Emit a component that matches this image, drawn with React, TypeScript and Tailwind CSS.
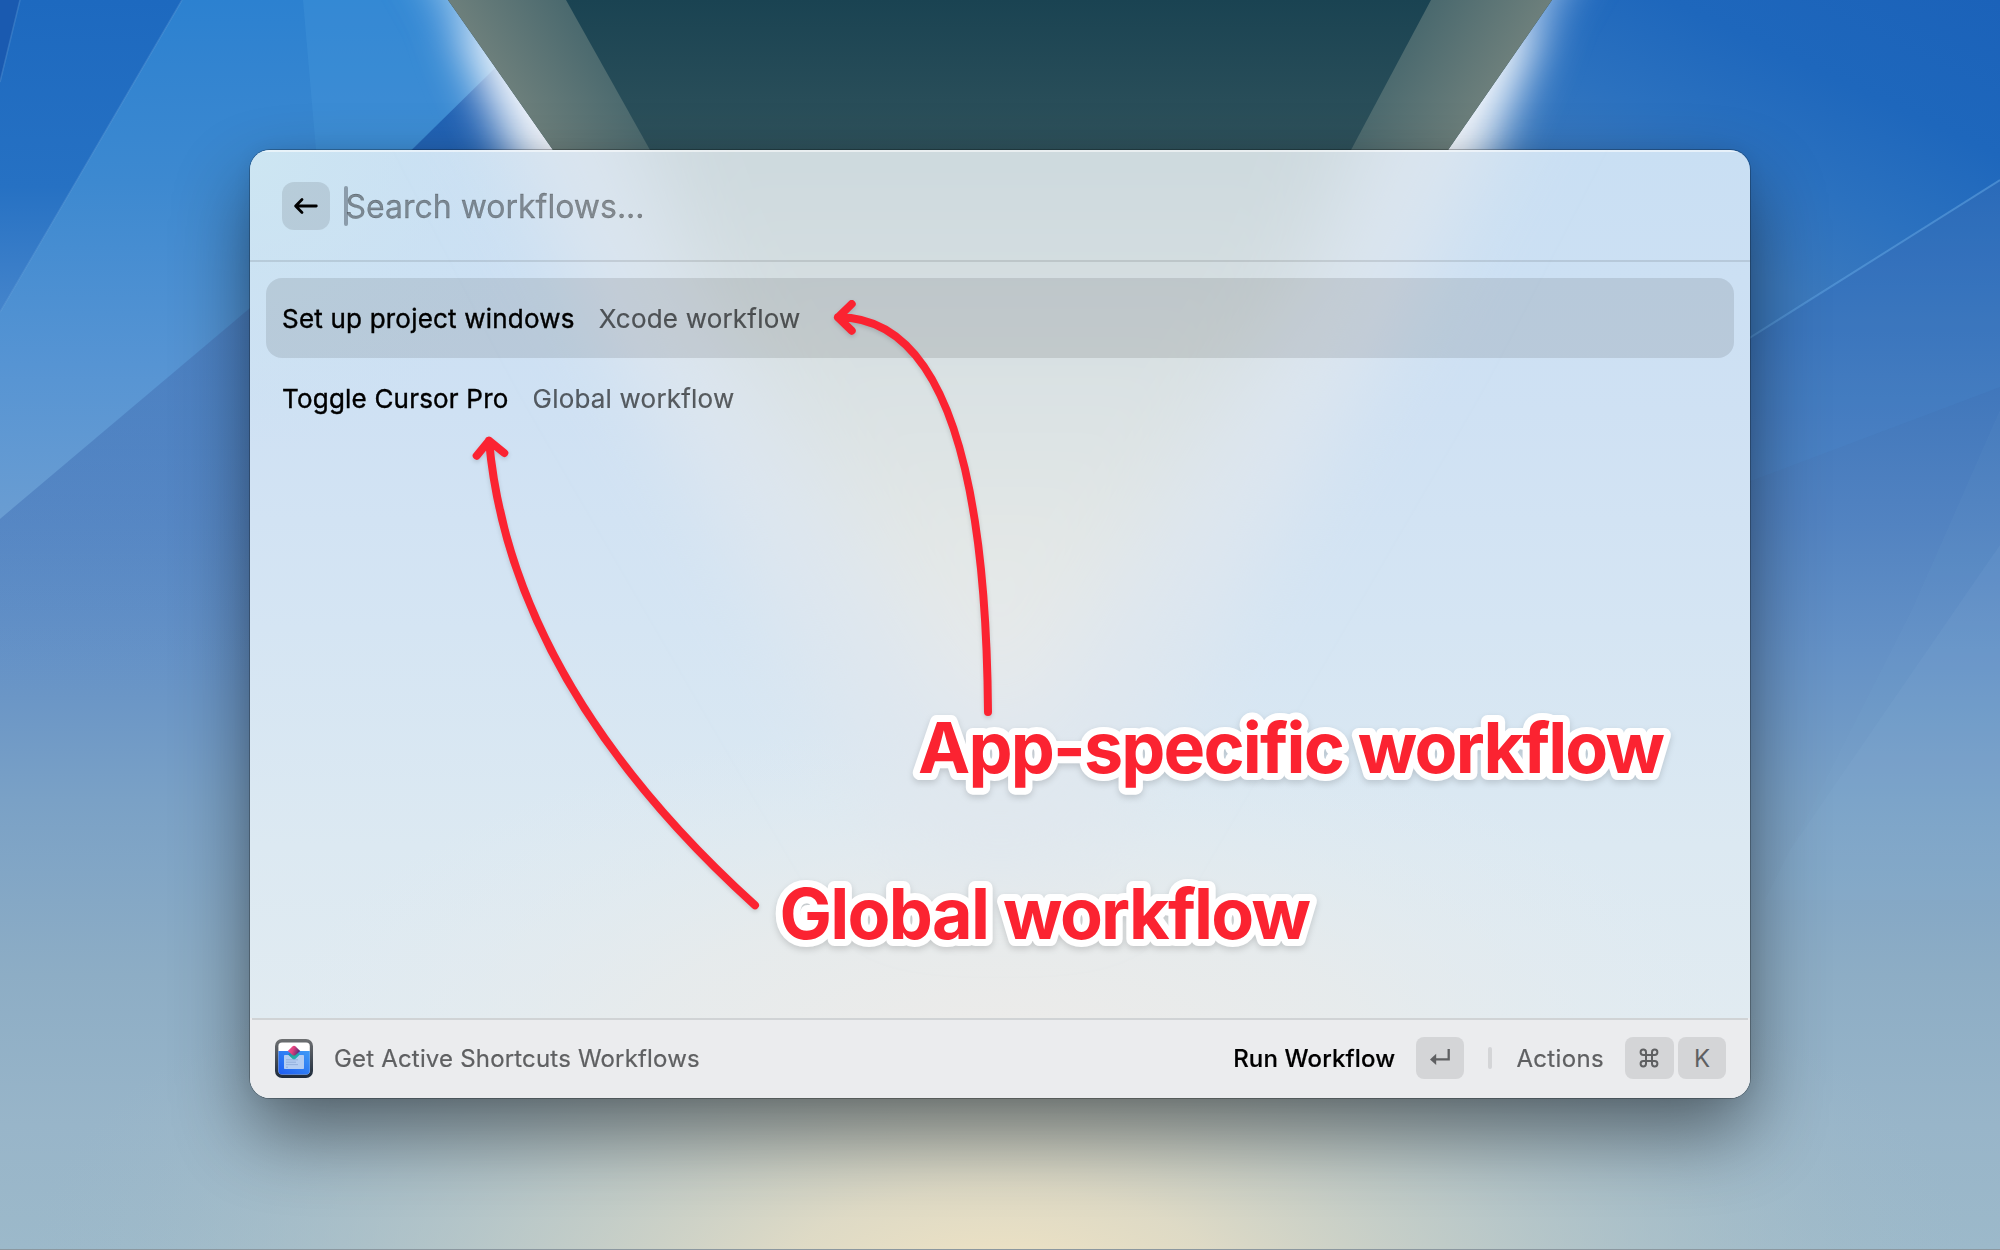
import type { ReactNode } from "react";

/* Abstract faceted wallpaper with a dark wedge at the top. */
function Wallpaper() {
  return (
    <svg className="absolute inset-0 size-full" viewBox="0 0 2000 1250" preserveAspectRatio="none" aria-hidden="true">
      <defs>
        <linearGradient id="base" gradientUnits="userSpaceOnUse" x1="0" y1="0" x2="0" y2="1250">
          <stop offset="0" stopColor="#1a5fb6" />
          <stop offset="0.14" stopColor="#2464b4" />
          <stop offset="0.3" stopColor="#3f76bb" />
          <stop offset="0.42" stopColor="#5283c1" />
          <stop offset="0.52" stopColor="#6491c6" />
          <stop offset="0.64" stopColor="#7aa1c6" />
          <stop offset="0.78" stopColor="#8dadc5" />
          <stop offset="0.9" stopColor="#98b5c9" />
          <stop offset="1" stopColor="#9cb9ca" />
        </linearGradient>
        <linearGradient id="leftLift" gradientUnits="userSpaceOnUse" x1="0" y1="300" x2="0" y2="700">
          <stop offset="0" stopColor="#6a9ad2" stopOpacity="0.4" />
          <stop offset="1" stopColor="#6a9ad2" stopOpacity="0" />
        </linearGradient>
        <radialGradient id="warm" gradientUnits="userSpaceOnUse" cx="0" cy="0" r="1" gradientTransform="translate(1000 1280) scale(980 420)">
          <stop offset="0" stopColor="#f0e3c3" />
          <stop offset="0.22" stopColor="#e4ddc5" stopOpacity="0.92" />
          <stop offset="0.5" stopColor="#c3cdc8" stopOpacity="0.8" />
          <stop offset="1" stopColor="#a0bac8" stopOpacity="0" />
        </radialGradient>
        <linearGradient id="facetA" gradientUnits="userSpaceOnUse" x1="0" y1="0" x2="0" y2="520">
          <stop offset="0" stopColor="#2c81d0" />
          <stop offset="0.35" stopColor="#3d89d0" />
          <stop offset="0.7" stopColor="#5694d3" />
          <stop offset="1" stopColor="#6a9dd2" />
        </linearGradient>
        <linearGradient id="facetB" gradientUnits="userSpaceOnUse" x1="0" y1="0" x2="0" y2="310">
          <stop offset="0" stopColor="#1d69bf" />
          <stop offset="0.6" stopColor="#2671c3" />
          <stop offset="1" stopColor="#4484cb" />
        </linearGradient>
        <linearGradient id="facetC" gradientUnits="userSpaceOnUse" x1="2000" y1="0" x2="1850" y2="320">
          <stop offset="0" stopColor="#1b62b9" />
          <stop offset="0.4" stopColor="#1e67bc" />
          <stop offset="0.7" stopColor="#2b71bf" />
          <stop offset="1" stopColor="#3c7abe" />
        </linearGradient>
        <linearGradient id="wedge" gradientUnits="userSpaceOnUse" x1="0" y1="0" x2="0" y2="150">
          <stop offset="0" stopColor="#1a4352" />
          <stop offset="1" stopColor="#2f525c" />
        </linearGradient>
        <linearGradient id="rimL" gradientUnits="userSpaceOnUse" x1="490" y1="110" x2="620" y2="25">
          <stop offset="0" stopColor="#76857f" />
          <stop offset="1" stopColor="#3f626a" />
        </linearGradient>
        <linearGradient id="rimR" gradientUnits="userSpaceOnUse" x1="1510" y1="110" x2="1380" y2="25">
          <stop offset="0" stopColor="#76857f" />
          <stop offset="1" stopColor="#3f626a" />
        </linearGradient>
        <filter id="glow" filterUnits="userSpaceOnUse" x="200" y="-200" width="1600" height="800">
          <feGaussianBlur stdDeviation="23" />
        </filter>
      </defs>
      <rect width="2000" height="1250" fill="url(#base)" />
      <rect width="2000" height="1250" fill="url(#warm)" />
      <polygon points="0,519 300,265 300,700 0,700" fill="url(#leftLift)" />
      <polygon points="182,0 495,0 495,68 250,308 0,519 0,312" fill="url(#facetA)" />
      <polygon points="303,0 495,0 495,68 412,150 316,150" fill="#4a9ade" opacity="0.3" />
      <polygon points="20,0 182,0 0,312 0,82" fill="url(#facetB)" />
      <polygon points="0,0 20,0 0,82" fill="#1a5ab0" />
      <path d="M182 0 0 312M20 0 0 82" stroke="#6fabe2" strokeOpacity="0.3" strokeWidth="1.5" />
      <polygon points="1400,0 2000,0 2000,180 1740,344 1400,517" fill="url(#facetC)" />
      <path d="M2000 180 1740 344" stroke="#5a9cdc" strokeOpacity="0.65" strokeWidth="2" />
      <polygon points="2000,180 1740,344 1740,485 2000,387" fill="#4f92dc" opacity="0.14" />
      <polygon points="2000,410 1912,610 1790,850 2000,850" fill="#8fb8e0" opacity="0.06" />
      <polygon points="2000,545 1962,600 1790,850 1765,900 2000,900" fill="#8fb8e0" opacity="0.1" />
      <g filter="url(#glow)">
        <polygon points="412,-60 620,-60 760,330 634,330" fill="#b9dbf6" opacity="0.85" />
        <polygon points="1588,-60 1380,-60 1240,330 1366,330" fill="#b9d4f3" opacity="0.85" />
        <polygon points="456,25 600,25 760,360 608,330 515,165" fill="#f4f8fd" />
        <polygon points="1544,25 1400,25 1240,360 1392,330 1485,165" fill="#f4f8fd" />
      </g>
      <polygon points="448,0 1552,0 1448,150 1300,360 700,360 553,150" fill="url(#wedge)" />
      <polygon points="448,0 566,0 650,150 553,150" fill="url(#rimL)" />
      <polygon points="1552,0 1431,0 1351,150 1448,150" fill="url(#rimR)" />
      <rect y="1249" width="2000" height="1" fill="#8b979f" />
    </svg>
  );
}

/* Frosted tint of the wallpaper seen through the window. */
function FrostedGlass() {
  return (
    <svg className="absolute inset-0 size-full" viewBox="250 150 1500 948" preserveAspectRatio="none" aria-hidden="true">
      <defs>
        <linearGradient id="glass" gradientUnits="userSpaceOnUse" x1="0" y1="150" x2="0" y2="1020">
          <stop offset="0" stopColor="#c9dff3" />
          <stop offset="0.3" stopColor="#cfe1f3" />
          <stop offset="0.55" stopColor="#d5e5f3" />
          <stop offset="0.8" stopColor="#dce9f2" />
          <stop offset="1" stopColor="#e1ebf1" />
        </linearGradient>
        <linearGradient id="beam" gradientUnits="userSpaceOnUse" x1="0" y1="150" x2="0" y2="780">
          <stop offset="0" stopColor="#cdd9de" />
          <stop offset="0.35" stopColor="#d9e1e3" />
          <stop offset="0.65" stopColor="#e4e8e7" />
          <stop offset="1" stopColor="#e8ebf0" />
        </linearGradient>
        <radialGradient id="floor" gradientUnits="userSpaceOnUse" cx="0" cy="0" r="1" gradientTransform="translate(1000 1080) scale(760 360)">
          <stop offset="0" stopColor="#eeebe8" />
          <stop offset="0.5" stopColor="#e8ebeb" stopOpacity="0.8" />
          <stop offset="1" stopColor="#e2ebf0" stopOpacity="0" />
        </radialGradient>
        <radialGradient id="corner" gradientUnits="userSpaceOnUse" cx="250" cy="150" r="300">
          <stop offset="0" stopColor="#cde6f2" />
          <stop offset="1" stopColor="#cbe2f3" stopOpacity="0" />
        </radialGradient>
        <filter id="soft" filterUnits="userSpaceOnUse" x="0" y="-200" width="2000" height="1400">
          <feGaussianBlur stdDeviation="42" />
        </filter>
      </defs>
      <rect x="250" y="150" width="1500" height="948" fill="url(#glass)" />
      <rect x="250" y="150" width="1500" height="948" fill="url(#corner)" />
      <rect x="250" y="150" width="1500" height="948" fill="url(#floor)" />
      <g filter="url(#soft)">
        <polygon points="430,0 1570,0 1400,330 1080,880 920,880 600,330" fill="#e0e7ee" opacity="0.75" />
        <polygon points="590,0 1410,0 1310,280 1030,720 970,720 690,280" fill="url(#beam)" />
      </g>
    </svg>
  );
}

function BackArrow() {
  return (
    <svg className="size-7" viewBox="0 0 28 28" fill="none" stroke="#000" strokeWidth="2.8" strokeLinecap="round" strokeLinejoin="round">
      <path d="M24.3 14H4M10 7.6 3.6 14 10 20.4" />
    </svg>
  );
}

function ReturnIcon() {
  return (
    <svg className="size-6" viewBox="0 0 24 24">
      <path d="M20.7 3v10.4H7" fill="none" stroke="#5f6062" strokeWidth="2.3" />
      <path d="M2 13.4 8.2 7.8v11.2Z" fill="#5f6062" />
    </svg>
  );
}

function CommandIcon() {
  return (
    <svg className="-ml-px size-6" viewBox="0 0 24 24" fill="none" stroke="#5f6062" strokeWidth="2">
      <path d="M9 9h6v6H9zM9 9H6.3A2.7 2.7 0 1 1 9 6.3zM15 9V6.3A2.7 2.7 0 1 1 17.7 9zM15 15h2.7a2.7 2.7 0 1 1-2.7 2.7zM9 15v2.7A2.7 2.7 0 1 1 6.3 15z" />
    </svg>
  );
}

function ExtensionIcon() {
  return (
    <svg className="h-[39px] w-[38px]" viewBox="0 0 38 39">
      <defs>
        <linearGradient id="frame" x1="0" y1="0" x2="0" y2="1">
          <stop offset="0" stopColor="#6e7072" />
          <stop offset="1" stopColor="#1d2a3b" />
        </linearGradient>
        <linearGradient id="panel" x1="1" y1="0" x2="0" y2="1">
          <stop offset="0" stopColor="#3f9bf6" />
          <stop offset="1" stopColor="#1e5cf2" />
        </linearGradient>
        <linearGradient id="gemTop" x1="0" y1="0" x2="1" y2="0.3">
          <stop offset="0" stopColor="#f0559c" />
          <stop offset="0.5" stopColor="#e0407c" />
          <stop offset="1" stopColor="#5a2a78" />
        </linearGradient>
        <linearGradient id="gemBottom" x1="0" y1="0" x2="1" y2="1">
          <stop offset="0" stopColor="#1768c8" />
          <stop offset="0.6" stopColor="#22b09c" />
          <stop offset="1" stopColor="#2f9be0" />
        </linearGradient>
      </defs>
      <rect width="38" height="39" rx="7" fill="url(#frame)" />
      <rect x="3.4" y="3.6" width="31.4" height="31.8" rx="3.6" fill="#fff" />
      <path d="M3.4 12h31.4v19.8a3.6 3.6 0 0 1-3.6 3.6H7a3.6 3.6 0 0 1-3.6-3.6Z" fill="url(#panel)" />
      <rect x="9" y="16" width="20" height="14" rx="0.8" fill="#b4cdf2" />
      <path d="M11 20.8h12M11 23.2h10M11 25.6h12M11 28.2h2" stroke="#8ba8d6" strokeWidth="0.8" />
      <path d="M13 15.5 19 10l6 5.5-4.4 4.2q-1.6 1.2-3.2 0Z" fill="url(#gemBottom)" />
      <path d="M12.8 12 17.4 7.4q1.6-1.2 3.2 0L25.2 12 20.6 16q-1.6 1.2-3.2 0Z" fill="url(#gemTop)" />
    </svg>
  );
}

function Key({ children, wide }: { children: ReactNode; wide?: boolean }) {
  return (
    <span
      className={
        wide
          ? "flex h-[42px] w-[49px] items-center justify-center rounded-lg bg-[#d4d5d7]"
          : "flex h-[42px] w-12 items-center justify-center rounded-lg bg-[#d4d5d7]"
      }
    >
      {children}
    </span>
  );
}

function WorkflowRow({ title, kind, selected }: { title: string; kind: string; selected?: boolean }) {
  return (
    <li className={selected ? "flex h-20 items-center gap-6 rounded-2xl bg-black/10 px-4" : "flex h-20 items-center gap-6 rounded-2xl px-4"}>
      <span className="tracking-[0.2px] text-black [-webkit-text-stroke:0.4px]">{title}</span>
      <span className="tracking-[0.2px] text-black/60 [-webkit-text-stroke:0.2px]">{kind}</span>
    </li>
  );
}

/* Hand-placed arrows and captions over the window. */
function Annotations() {
  return (
    <svg className="pointer-events-none absolute inset-0 size-full" viewBox="0 0 2000 1250">
      <g fill="none" stroke="#fb2331" strokeWidth="8" strokeLinecap="round" strokeLinejoin="round" className="drop-shadow-[0_2px_2px_rgba(0,0,0,0.14)]">
        <path d="M988 712Q985 317 838 317.3M851.7 304 838 317.3 851.7 330.7" />
        <path d="M755 905.3Q511 684 489 440.7M476.7 455.7 489 440.7 504.3 453" />
      </g>
      <g
        fill="#fb2331"
        stroke="#fff"
        strokeWidth="14"
        strokeLinejoin="round"
        className="font-['Inter',sans-serif] text-[70px] font-bold [paint-order:stroke] drop-shadow-[0_3px_3px_rgba(0,0,0,0.14)]"
      >
        <text x="918" y="773.3" className="tracking-[-1.83px]">App-specific workflow</text>
        <text x="779.5" y="939" className="tracking-[-1.7px]">Global workflow</text>
      </g>
    </svg>
  );
}

export default function App() {
  return (
    <div className="relative h-[1250px] w-[2000px] overflow-hidden font-['Inter',sans-serif]">
      <Wallpaper />
      <div className="relative flex h-full flex-col items-center pt-[150px]">
        <main className="relative h-[948px] w-[1500px] rounded-[20px] shadow-[0_0_0_1px_rgba(0,0,0,0.25),0_36px_76px_rgba(0,0,0,0.46),0_0_24px_rgba(0,0,0,0.08)]">
          <div className="relative flex h-full flex-col overflow-hidden rounded-[20px]">
            <FrostedGlass />
            <header className="relative flex h-28 items-center border-b-2 border-black/10 px-8 shadow-[inset_0_2px_0_rgba(255,255,255,0.55)]">
              <button className="mt-0.5 flex size-12 items-center justify-center rounded-xl bg-black/10">
                <BackArrow />
              </button>
              <span className="mt-0.5 ml-3.5 h-10 w-1 rounded-full bg-[#8b9cab]" />
              <span className="mt-1 -ml-[2.5px] text-[32px] text-black/40 [-webkit-text-stroke:0.3px]">Search workflows...</span>
            </header>
            <ul className="relative flex-1 px-4 pt-4 text-[26px]">
              <WorkflowRow title="Set up project windows" kind="Xcode workflow" selected />
              <WorkflowRow title="Toggle Cursor Pro" kind="Global workflow" />
            </ul>
            <footer className="relative h-20 bg-[#ebecee] px-0.5">
              <div className="flex h-full items-center border-t-2 border-[#d0d3d5] pr-[22px] pb-0.5 pl-[23px] text-2xl text-[#5f6062]">
                <ExtensionIcon />
                <span className="mt-0.5 ml-[21px] tracking-[0.18px] [-webkit-text-stroke:0.2px]">Get Active Shortcuts Workflows</span>
                <span className="mt-0.5 ml-auto font-medium tracking-[0.15px] text-black [-webkit-text-stroke:0.2px]">Run Workflow</span>
                <span className="ml-[21px]"><Key><ReturnIcon /></Key></span>
                <span className="mx-6 h-[22px] w-1 rounded-full bg-[#d4d5d7]" />
                <span className="mt-0.5 tracking-[0.35px] [-webkit-text-stroke:0.2px]">Actions</span>
                <span className="ml-[21px] flex gap-1">
                  <Key wide><CommandIcon /></Key>
                  <Key><span className="mt-px">K</span></Key>
                </span>
              </div>
            </footer>
          </div>
        </main>
      </div>
      <Annotations />
    </div>
  );
}
